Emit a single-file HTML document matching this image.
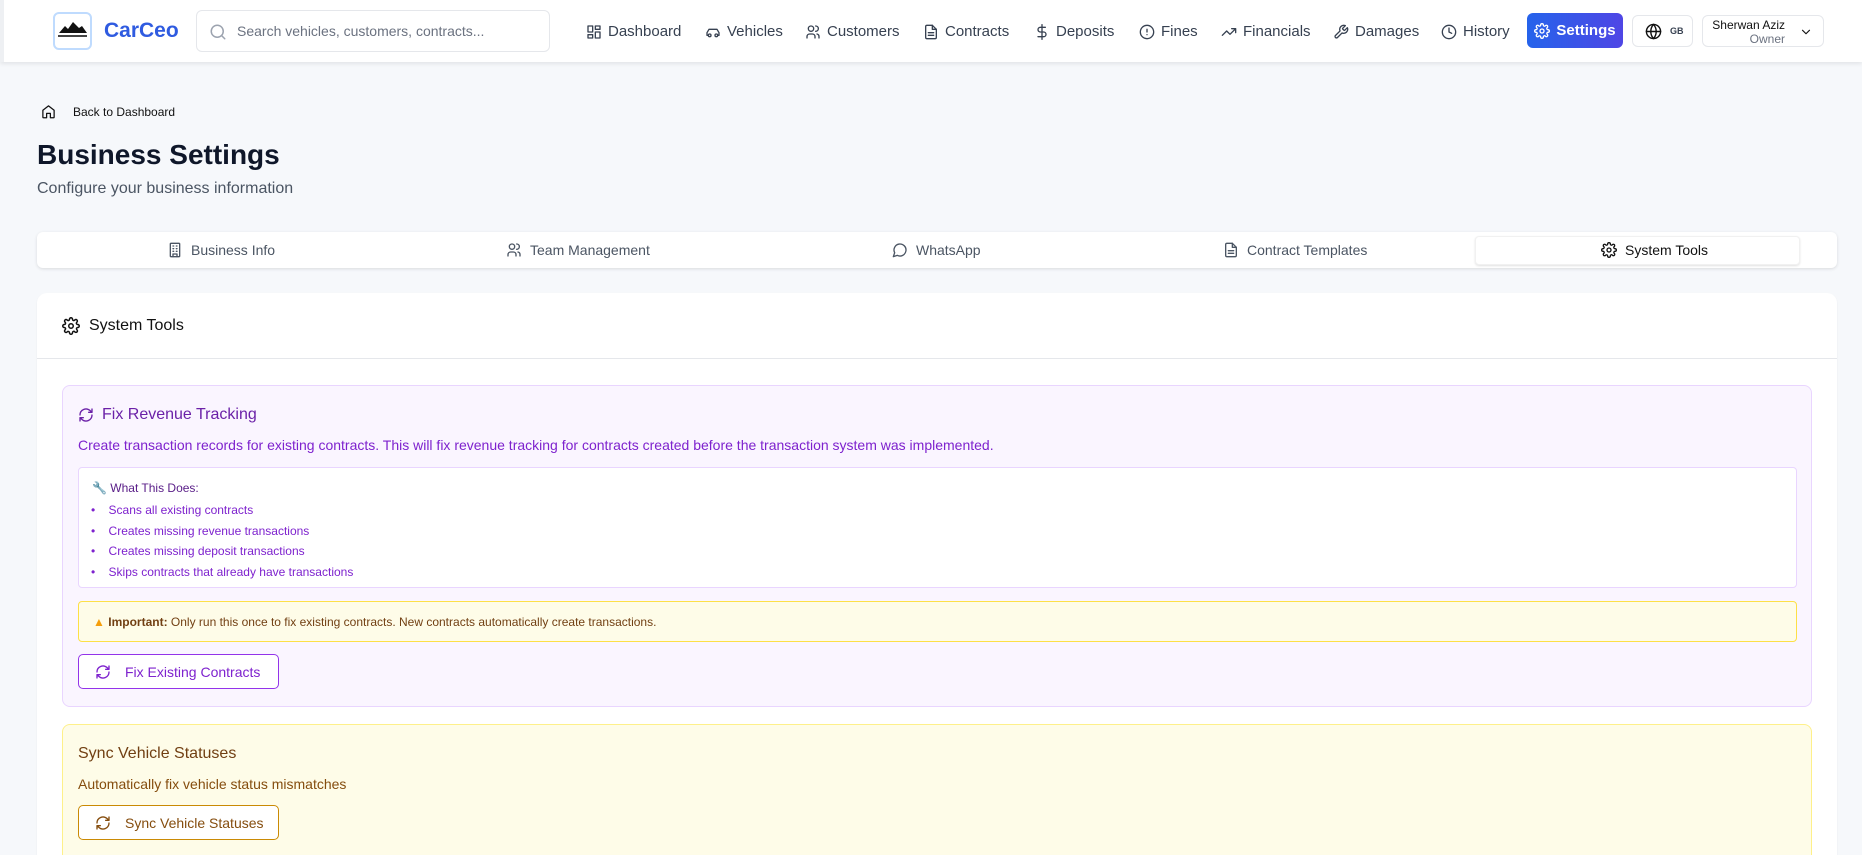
<!DOCTYPE html>
<html><head><meta charset="utf-8"><style>
*{box-sizing:border-box;margin:0;padding:0}
html,body{width:1862px;height:855px;overflow:hidden}
body{background:#f6f8fb;font-family:"Liberation Sans",sans-serif;color:#111827;position:relative}
.abs{position:absolute}
svg{display:block}
.nav{position:absolute;left:0;top:0;width:1862px;height:62px;background:#fff;box-shadow:0 2px 4px rgba(0,0,0,.08);border-left:4px solid #eef0f3}
.ni{position:absolute;top:23px;font-size:15px;color:#374151;display:flex;align-items:center;gap:6px;white-space:nowrap}
.ic{width:16px;height:16px;fill:none;stroke:currentColor;stroke-width:2;stroke-linecap:round;stroke-linejoin:round}
.tab{position:absolute;top:242px;font-size:14px;color:#4b5563;display:flex;align-items:center;gap:8px;white-space:nowrap}
</style></head><body>
<div class="nav">
 <div class="abs" style="left:49px;top:12px;width:39px;height:38px;border:2px solid #bfdbfe;border-radius:6px;background:#fff">
  <svg width="35" height="34" viewBox="0 0 35 34"><path d="M4 19 L10 12 L13 15 L18 8 L24 14 L27 12 L32 19Z" fill="#111"/><rect x="3" y="21" width="29" height="2" fill="#444"/></svg>
 </div>
 <div class="abs" style="left:100px;top:19px;font-size:21px;font-weight:bold;color:#2f5be0">CarCeo</div>
 <div class="abs" style="left:192px;top:10px;width:354px;height:42px;border:1px solid #e5e7eb;border-radius:6px">
  <svg class="abs ic" style="left:12px;top:12px;width:18px;height:18px;color:#9ca3af" viewBox="0 0 24 24"><circle cx="11" cy="11" r="8"/><path d="M21 21l-4.3-4.3"/></svg>
  <div class="abs" style="left:40px;top:12px;font-size:14px;color:#6b7280">Search vehicles, customers, contracts...</div>
 </div>
 <div class="ni" style="left:582px"><svg class="ic" viewBox="0 0 24 24"><rect x="3" y="3" width="7" height="9"/><rect x="14" y="3" width="7" height="5"/><rect x="14" y="12" width="7" height="9"/><rect x="3" y="16" width="7" height="5"/></svg>Dashboard</div>
 <div class="ni" style="left:701px"><svg class="ic" viewBox="0 0 24 24"><path d="M19 17h2v-4l-3-5H6l-3 5v4h2"/><circle cx="7" cy="17" r="2"/><circle cx="17" cy="17" r="2"/></svg>Vehicles</div>
 <div class="ni" style="left:801px"><svg class="ic" viewBox="0 0 24 24"><circle cx="9" cy="7" r="4"/><path d="M3 21v-2a4 4 0 014-4h4a4 4 0 014 4v2M16 3a4 4 0 010 8M21 21v-2a4 4 0 00-3-4"/></svg>Customers</div>
 <div class="ni" style="left:919px"><svg class="ic" viewBox="0 0 24 24"><path d="M14 2H6a2 2 0 00-2 2v16a2 2 0 002 2h12a2 2 0 002-2V8z"/><path d="M14 2v6h6M8 13h8M8 17h8"/></svg>Contracts</div>
 <div class="ni" style="left:1030px"><svg class="ic" viewBox="0 0 24 24"><path d="M12 1v22M17 5H9.5a3.5 3.5 0 000 7h5a3.5 3.5 0 010 7H6"/></svg>Deposits</div>
 <div class="ni" style="left:1135px"><svg class="ic" viewBox="0 0 24 24"><circle cx="12" cy="12" r="10"/><path d="M12 8v4M12 16h.01"/></svg>Fines</div>
 <div class="ni" style="left:1217px"><svg class="ic" viewBox="0 0 24 24"><path d="M22 7l-8.5 8.5-5-5L2 17M16 7h6v6"/></svg>Financials</div>
 <div class="ni" style="left:1329px"><svg class="ic" viewBox="0 0 24 24"><path d="M14.7 6.3a1 1 0 000 1.4l1.6 1.6a1 1 0 001.4 0l3.8-3.8a6 6 0 01-7.9 7.9l-6.9 6.9a2.1 2.1 0 01-3-3l6.9-6.9a6 6 0 017.9-7.9z"/></svg>Damages</div>
 <div class="ni" style="left:1437px"><svg class="ic" viewBox="0 0 24 24"><circle cx="12" cy="12" r="10"/><path d="M12 6v6l4 2"/></svg>History</div>
 <div class="abs" style="left:1523px;top:13px;width:96px;height:35px;border-radius:6px;background:linear-gradient(90deg,#2563eb,#4f46e5);color:#fff;font-size:15px;font-weight:bold;display:flex;align-items:center;justify-content:center;gap:6px"><svg class="ic" viewBox="0 0 24 24"><circle cx="12" cy="12" r="3"/><path d="M19.4 15a1.7 1.7 0 00.3 1.8l.1.1a2 2 0 11-2.8 2.8l-.1-.1a1.7 1.7 0 00-2.9 1.2V21a2 2 0 11-4 0v-.1A1.7 1.7 0 008.9 19.4a1.7 1.7 0 00-1.8.3l-.1.1a2 2 0 11-2.8-2.8l.1-.1a1.7 1.7 0 00-1.2-2.9H3a2 2 0 110-4h.1A1.7 1.7 0 004.6 8.9a1.7 1.7 0 00-.3-1.8l-.1-.1a2 2 0 112.8-2.8l.1.1a1.7 1.7 0 001.8.3H9a1.7 1.7 0 001-1.5V3a2 2 0 114 0v.1a1.7 1.7 0 001 1.5 1.7 1.7 0 001.8-.3l.1-.1a2 2 0 112.8 2.8l-.1.1a1.7 1.7 0 00-.3 1.8V9a1.7 1.7 0 001.5 1H21a2 2 0 110 4h-.1a1.7 1.7 0 00-1.5 1z"/></svg>Settings</div>
 <div class="abs" style="left:1628px;top:15px;width:61px;height:32px;border:1px solid #e5e7eb;border-radius:6px;display:flex;align-items:center;padding-left:12px;gap:8px;font-size:9px;font-weight:bold;color:#374151"><svg class="ic" style="width:17px;height:17px;color:#111" viewBox="0 0 24 24"><circle cx="12" cy="12" r="10"/><path d="M2 12h20M12 2a15 15 0 010 20M12 2a15 15 0 000 20"/></svg>GB</div>
 <div class="abs" style="left:1698px;top:15px;width:122px;height:32px;border:1px solid #e5e7eb;border-radius:6px">
  <div class="abs" style="right:38px;top:2px;font-size:12px;color:#111;white-space:nowrap">Sherwan Aziz</div>
  <div class="abs" style="right:38px;top:16px;font-size:12px;color:#6b7280">Owner</div>
  <svg class="abs ic" style="right:10px;top:9px;width:14px;height:14px;color:#111" viewBox="0 0 24 24"><path d="M6 9l6 6 6-6"/></svg>
 </div>
</div>

<svg class="abs ic" style="left:41px;top:104px;width:15px;height:15px;color:#111" viewBox="0 0 24 24"><path d="M3 10l9-7 9 7v11a1 1 0 01-1 1h-5v-7H9v7H4a1 1 0 01-1-1z"/></svg>
<div class="abs" style="left:73px;top:105px;font-size:12px;color:#111">Back to Dashboard</div>
<div class="abs" style="left:37px;top:139px;font-size:28px;font-weight:bold;color:#0f172a">Business Settings</div>
<div class="abs" style="left:37px;top:180px;font-size:16px;color:#4b5563">Configure your business information</div>

<div class="abs" style="left:37px;top:232px;width:1800px;height:36px;background:#fff;border-radius:6px;box-shadow:0 1px 3px rgba(0,0,0,.12)"></div>
<div class="abs" style="left:1475px;top:236px;width:325px;height:29px;background:#fff;border-radius:4px;box-shadow:0 1px 2px rgba(0,0,0,.12);border:1px solid #f1f1f1"></div>
<div class="tab" style="left:167px"><svg class="ic" viewBox="0 0 24 24"><rect x="5" y="2" width="14" height="20" rx="1"/><path d="M9 22v-4h6v4M9 6h1M14 6h1M9 10h1M14 10h1M9 14h1M14 14h1"/></svg>Business Info</div>
<div class="tab" style="left:506px"><svg class="ic" viewBox="0 0 24 24"><circle cx="9" cy="7" r="4"/><path d="M3 21v-2a4 4 0 014-4h4a4 4 0 014 4v2M16 3a4 4 0 010 8M21 21v-2a4 4 0 00-3-4"/></svg>Team Management</div>
<div class="tab" style="left:892px"><svg class="ic" viewBox="0 0 24 24"><path d="M7.9 20A9 9 0 104 16.1L2 22z"/></svg>WhatsApp</div>
<div class="tab" style="left:1223px"><svg class="ic" viewBox="0 0 24 24"><path d="M14 2H6a2 2 0 00-2 2v16a2 2 0 002 2h12a2 2 0 002-2V8z"/><path d="M14 2v6h6M8 13h8M8 17h8"/></svg>Contract Templates</div>
<div class="tab" style="left:1601px;color:#111"><svg class="ic" viewBox="0 0 24 24"><circle cx="12" cy="12" r="3"/><path d="M19.4 15a1.7 1.7 0 00.3 1.8l.1.1a2 2 0 11-2.8 2.8l-.1-.1a1.7 1.7 0 00-2.9 1.2V21a2 2 0 11-4 0v-.1A1.7 1.7 0 008.9 19.4a1.7 1.7 0 00-1.8.3l-.1.1a2 2 0 11-2.8-2.8l.1-.1a1.7 1.7 0 00-1.2-2.9H3a2 2 0 110-4h.1A1.7 1.7 0 004.6 8.9a1.7 1.7 0 00-.3-1.8l-.1-.1a2 2 0 112.8-2.8l.1.1a1.7 1.7 0 001.8.3H9a1.7 1.7 0 001-1.5V3a2 2 0 114 0v.1a1.7 1.7 0 001 1.5 1.7 1.7 0 001.8-.3l.1-.1a2 2 0 112.8 2.8l-.1.1a1.7 1.7 0 00-.3 1.8V9a1.7 1.7 0 001.5 1H21a2 2 0 110 4h-.1a1.7 1.7 0 00-1.5 1z"/></svg>System Tools</div>

<div class="abs" style="left:37px;top:293px;width:1800px;height:562px;background:#fff;border-radius:10px 10px 0 0;box-shadow:0 1px 2px rgba(0,0,0,.05)">
 <div class="abs" style="left:0;top:65px;width:100%;height:1px;background:#e5e7eb"></div>
 <div class="abs" style="left:25px;top:24px;display:flex;align-items:center;gap:9px;font-size:16px;color:#111"><svg class="ic" style="width:18px;height:18px" viewBox="0 0 24 24"><circle cx="12" cy="12" r="3"/><path d="M19.4 15a1.7 1.7 0 00.3 1.8l.1.1a2 2 0 11-2.8 2.8l-.1-.1a1.7 1.7 0 00-2.9 1.2V21a2 2 0 11-4 0v-.1A1.7 1.7 0 008.9 19.4a1.7 1.7 0 00-1.8.3l-.1.1a2 2 0 11-2.8-2.8l.1-.1a1.7 1.7 0 00-1.2-2.9H3a2 2 0 110-4h.1A1.7 1.7 0 004.6 8.9a1.7 1.7 0 00-.3-1.8l-.1-.1a2 2 0 112.8-2.8l.1.1a1.7 1.7 0 001.8.3H9a1.7 1.7 0 001-1.5V3a2 2 0 114 0v.1a1.7 1.7 0 001 1.5 1.7 1.7 0 001.8-.3l.1-.1a2 2 0 112.8 2.8l-.1.1a1.7 1.7 0 00-.3 1.8V9a1.7 1.7 0 001.5 1H21a2 2 0 110 4h-.1a1.7 1.7 0 00-1.5 1z"/></svg>System Tools</div>
</div>

<div class="abs" style="left:62px;top:385px;width:1750px;height:322px;background:#faf5ff;border:1px solid #e9d5ff;border-radius:8px">
 <div class="abs" style="left:15px;top:20px;display:flex;align-items:center;gap:8px;font-size:16px;color:#6b21a8"><svg class="ic" viewBox="0 0 24 24"><path d="M21 12a9 9 0 01-15 6.7L3 16M3 12a9 9 0 0115-6.7L21 8M21 3v5h-5M3 21v-5h5"/></svg>Fix Revenue Tracking</div>
 <div class="abs" style="left:15px;top:51px;font-size:14px;color:#7e22ce;white-space:nowrap">Create transaction records for existing contracts. This will fix revenue tracking for contracts created before the transaction system was implemented.</div>
 <div class="abs" style="left:15px;top:81px;width:1719px;height:121px;background:#fff;border:1px solid #e9d5ff;border-radius:4px;font-size:12px">
  <div class="abs" style="left:13px;top:13px;color:#581c87"><span style="color:#aaa">🔧</span> What This Does:</div>
  <div class="abs" style="left:12px;top:32px;color:#7e22ce;line-height:20.5px">
   <div>•&nbsp;&nbsp;&nbsp; Scans all existing contracts</div>
   <div>•&nbsp;&nbsp;&nbsp; Creates missing revenue transactions</div>
   <div>•&nbsp;&nbsp;&nbsp; Creates missing deposit transactions</div>
   <div>•&nbsp;&nbsp;&nbsp; Skips contracts that already have transactions</div>
  </div>
 </div>
 <div class="abs" style="left:15px;top:215px;width:1719px;height:41px;background:#fefce8;border:1px solid #fde047;border-radius:4px;font-size:12px;color:#713f12;padding:13px 0 0 14px"><span style="color:#f59e0b">▲</span> <b>Important:</b> Only run this once to fix existing contracts. New contracts automatically create transactions.</div>
 <div class="abs" style="left:15px;top:268px;width:201px;height:35px;background:#fff;border:1px solid #9333ea;border-radius:5px;display:flex;align-items:center;gap:14px;padding-left:16px;font-size:14px;color:#7e22ce"><svg class="ic" viewBox="0 0 24 24"><path d="M21 12a9 9 0 01-15 6.7L3 16M3 12a9 9 0 0115-6.7L21 8M21 3v5h-5M3 21v-5h5"/></svg>Fix Existing Contracts</div>
</div>

<div class="abs" style="left:62px;top:724px;width:1750px;height:131px;background:#fefce8;border:1px solid #fef08a;border-bottom:none;border-radius:8px 8px 0 0">
 <div class="abs" style="left:15px;top:20px;font-size:16px;color:#713f12">Sync Vehicle Statuses</div>
 <div class="abs" style="left:15px;top:51px;font-size:14px;color:#854d0e">Automatically fix vehicle status mismatches</div>
 <div class="abs" style="left:15px;top:80px;width:201px;height:35px;background:#fff;border:1px solid #ca8a04;border-radius:5px;display:flex;align-items:center;gap:14px;padding-left:16px;font-size:14px;color:#854d0e"><svg class="ic" viewBox="0 0 24 24"><path d="M21 12a9 9 0 01-15 6.7L3 16M3 12a9 9 0 0115-6.7L21 8M21 3v5h-5M3 21v-5h5"/></svg>Sync Vehicle Statuses</div>
</div>
</body></html>
